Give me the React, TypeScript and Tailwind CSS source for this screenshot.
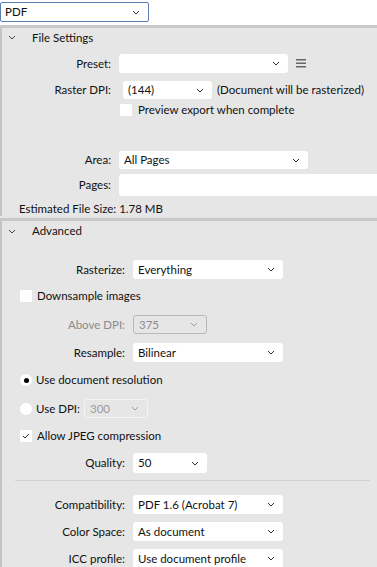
import React from "react";

const Chevron = ({ className = "" }: { className?: string }) => (
  <svg width="8" height="5" viewBox="0 0 8 5" className={className}>
    <path d="M1 1l3 3 3-3" fill="none" stroke="currentColor" strokeWidth="1" />
  </svg>
);

const Select = ({
  value,
  w,
  h = "h-[19px]",
  disabled = false,
  light = false,
}: {
  value: string;
  w: string;
  h?: string;
  disabled?: boolean;
  light?: boolean;
}) => (
  <div
    className={`${w} ${h} rounded-[3px] flex items-center justify-between pl-[5px] pr-[8px] shrink-0 ${
      disabled
        ? light
          ? "border border-[#f4f4f4] text-[#9a9a9a]"
          : "border border-[#b8b8b8] text-[#8c8c8c]"
        : "bg-white text-[#111]"
    }`}
  >
    <span>{value}</span>
    <Chevron className={disabled ? "text-[#a0a0a0]" : "text-[#333]"} />
  </div>
);

const Row = ({
  label,
  lw,
  mt,
  children,
  muted = false,
}: {
  label: string;
  lw: string;
  mt: string;
  children: React.ReactNode;
  muted?: boolean;
}) => (
  <div className={`flex items-center ${mt}`}>
    <div className={`${lw} shrink-0 text-right pr-[8px] ${muted ? "text-[#8a8a8a]" : ""}`}>{label}</div>
    {children}
  </div>
);

const Check = ({ checked = false }: { checked?: boolean }) => (
  <div className="w-[12px] h-[12px] bg-white rounded-[1px] flex items-center justify-center shrink-0">
    {checked && (
      <svg width="8" height="6" viewBox="0 0 8 6">
        <path d="M1 3l2 2 4-4" fill="none" stroke="#333" strokeWidth="1" />
      </svg>
    )}
  </div>
);

const Radio = ({ on = false }: { on?: boolean }) => (
  <div className="w-[12px] h-[12px] bg-white rounded-full flex items-center justify-center shrink-0">
    {on && <div className="w-[5px] h-[5px] rounded-full bg-black" />}
  </div>
);

const Header = ({ title, h }: { title: string; h: string }) => (
  <div className={`flex items-center ${h}`}>
    <Chevron className="ml-[6px] text-[#444]" />
    <span className="ml-[16px]">{title}</span>
  </div>
);

export default function App() {
  return (
    <div className="w-[377px] h-[567px] overflow-hidden bg-[#e6e6e6] text-[11.5px] text-[#111] leading-none whitespace-nowrap font-['Lato',sans-serif]">
      {/* format picker */}
      <div className="h-[25px] bg-white pt-[2px]">
        <div className="w-[149px] h-[20px] border border-[#5b7fb0] rounded-[2px] flex items-center justify-between pl-[4px] pr-[8px] bg-white">
          <span>PDF</span>
          <Chevron className="text-[#333]" />
        </div>
      </div>
      <div className="h-[3px] bg-[#c8c8c8]" />

      <div className="border-l-2 border-[#c4c4c4]">
        {/* File Settings */}
        <Header title="File Settings" h="h-[19px]" />
        <Row label="Preset:" lw="w-[117px]" mt="mt-[7px]">
          <div className="w-[169px] h-[19px] bg-white rounded-[3px] flex items-center justify-end pr-[8px]">
            <Chevron className="text-[#333]" />
          </div>
          <svg width="10" height="9" viewBox="0 0 10 9" className="ml-[8px]">
            <rect x="0" y="0" width="10" height="1.5" fill="#666" />
            <rect x="0" y="3.5" width="10" height="1.5" fill="#666" />
            <rect x="0" y="7" width="10" height="1.5" fill="#666" />
          </svg>
        </Row>
        <Row label="Raster DPI:" lw="w-[117px]" mt="mt-[8px]">
          <div className="pl-[4px]">
            <Select value="(144)" w="w-[89px]" h="h-[18px]" />
          </div>
          <span className="ml-[5px]">(Document will be rasterized)</span>
        </Row>
        <div className="flex items-center mt-[5px] pl-[118px]">
          <Check />
          <span className="ml-[6px]">Preview export when complete</span>
        </div>

        <Row label="Area:" lw="w-[117px]" mt="mt-[35px]">
          <Select value="All Pages" w="w-[189px]" h="h-[18px]" />
        </Row>
        <Row label="Pages:" lw="w-[117px]" mt="mt-[5px]">
          <div className="flex-1 h-[22px] bg-white rounded-l-[3px]" />
        </Row>
        <div className="mt-[6px] h-[14px] flex items-center pl-[17px]">Estimated File Size: 1.78 MB</div>
      </div>

      <div className="mt-[2px] h-[3px] bg-[#c8c8c8]" />

      <div className="border-l-2 border-[#c4c4c4] h-full">
        {/* Advanced */}
        <Header title="Advanced" h="h-[20px]" />
        <Row label="Rasterize:" lw="w-[131px]" mt="mt-[19px]">
          <Select value="Everything" w="w-[150px]" />
        </Row>
        <div className="flex items-center mt-[11px] pl-[18px]">
          <Check />
          <span className="ml-[5px]">Downsample images</span>
        </div>
        <Row label="Above DPI:" lw="w-[131px]" mt="mt-[13px]" muted>
          <Select value="375" w="w-[74px]" disabled />
        </Row>
        <Row label="Resample:" lw="w-[131px]" mt="mt-[9px]">
          <Select value="Bilinear" w="w-[150px]" />
        </Row>
        <div className="flex items-center mt-[12px] pl-[18px] h-[12px]">
          <Radio on />
          <span className="ml-[4px]">Use document resolution</span>
        </div>
        <div className="flex items-center mt-[13px] pl-[18px]">
          <Radio />
          <span className="ml-[4px] w-[48px]">Use DPI:</span>
          <Select value="300" w="w-[64px]" disabled light />
        </div>
        <div className="flex items-center mt-[12px] pl-[18px]">
          <Check checked />
          <span className="ml-[5px]">Allow JPEG compression</span>
        </div>
        <Row label="Quality:" lw="w-[131px]" mt="mt-[11px]">
          <Select value="50" w="w-[74px]" h="h-[20px]" />
        </Row>
        <div className="mt-[7px] ml-[13px] mr-[7px] h-px bg-[#d2d2d2]" />
        <Row label="Compatibility:" lw="w-[131px]" mt="mt-[14px]">
          <Select value="PDF 1.6 (Acrobat 7)" w="w-[150px]" />
        </Row>
        <Row label="Color Space:" lw="w-[131px]" mt="mt-[8px]">
          <Select value="As document" w="w-[150px]" />
        </Row>
        <Row label="ICC profile:" lw="w-[131px]" mt="mt-[8px]">
          <Select value="Use document profile" w="w-[150px]" />
        </Row>
      </div>
    </div>
  );
}
